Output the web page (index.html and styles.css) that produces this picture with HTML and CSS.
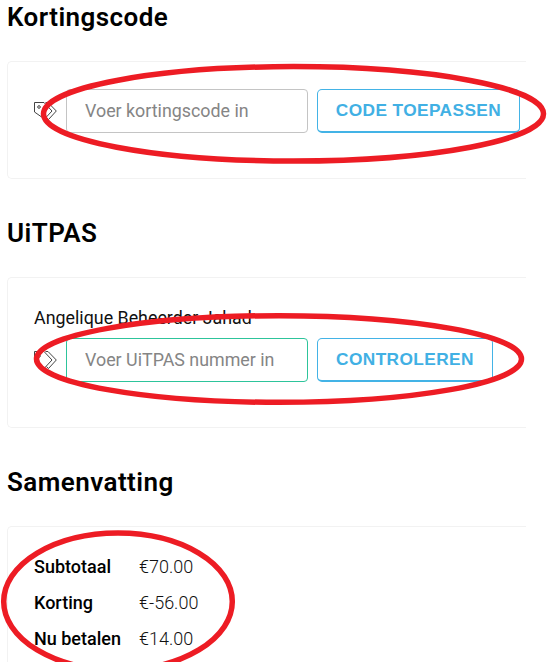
FILE: index.html
```html
<!DOCTYPE html>
<html lang="nl">
<head>
  <meta charset="UTF-8">
  <title>Samenvatting</title>
  <link rel="stylesheet" href="styles.css">
</head>
<body>

<svg class="hidden" width="0" height="0">
  <symbol id="tags" viewBox="0 0 23 18">
    <path d="M.5 .5h9.500l8 8.500-7.500 8L.5 10z"/>
    <circle cx="5" cy="5" r="1.300"/>
    <path d="M11.500 .5h2.500L22.300 9l-7.800 8.500-2-1.800"/>
  </symbol>
</svg>

<h2>Kortingscode</h2>
<div class="card card-code">
  <div class="form-row">
    <svg class="tags"><use href="#tags"/></svg>
    <input type="text" placeholder="Voer kortingscode in">
    <button class="btn-code">CODE TOEPASSEN</button>
  </div>
</div>

<h2>UiTPAS</h2>
<div class="card card-uitpas">
  <div class="name">Angelique Beheerder Jahad</div>
  <div class="form-row">
    <svg class="tags"><use href="#tags"/></svg>
    <input class="valid" type="text" placeholder="Voer UiTPAS nummer in">
    <button class="btn-check">CONTROLEREN</button>
  </div>
</div>

<h2>Samenvatting</h2>
<div class="card card-summary">
  <table>
    <tr>
      <th>Subtotaal</th>
      <td>€70.00</td>
    </tr>
    <tr>
      <th>Korting</th>
      <td>€-56.00</td>
    </tr>
    <tr>
      <th>Nu betalen</th>
      <td>€14.00</td>
    </tr>
  </table>
</div>

<!-- Red markings over the page -->
<svg class="marks" width="552" height="662">
  <ellipse cx="293.500" cy="113.800" rx="250" ry="47.200"/>
  <ellipse cx="279" cy="359" rx="242.500" ry="43.300"/>
  <ellipse cx="118" cy="601.500" rx="114.300" ry="68.500"/>
</svg>

</body>
</html>
```

FILE: styles.css
```css
* {
  box-sizing: border-box;
}
body {
  margin: 0;
  padding-left: 7px;
  height: 662px;
  overflow: hidden;
  background-color: #fff;
  color: #111;
  font-family: Roboto, sans-serif;
  font-size: 17.85px;
}
h2 {
  margin: 0;
  height: 61px;
  line-height: 34px;
  font-size: 26px;
  font-weight: 600;
  letter-spacing: 0.45px;
  color: #000;
}
.card {
  width: 519px;
  border: 1px solid #f2f2f2;
  border-right: none;
  border-radius: 5px 0 0 5px;
  padding-left: 26px;
  margin-bottom: 37px;
}
.card-code {
  height: 118px;
  padding-top: 27px;
}
.card-uitpas {
  height: 151px;
  padding-top: 27px;
}
.card-summary {
  height: 136px;
  padding-top: 21px;
  border-bottom: none;
  border-radius: 5px 0 0 0;
  margin-bottom: 0;
}
.name {
  height: 33px;
  line-height: 26px;
}
.form-row {
  display: flex;
  align-items: flex-start;
}
.hidden {
  position: absolute;
}
.tags {
  width: 23px;
  height: 18px;
  margin: 13px 9px 0 0;
  fill: none;
  stroke: #444;
  stroke-width: 1;
}
input {
  width: 242px;
  height: 44px;
  margin-right: 9px;
  padding: 0 18px 1px;
  border: 1px solid #c4c4c4;
  border-radius: 4px;
  background-color: #fff;
  font-family: inherit;
  font-size: 17.85px;
}
input::placeholder {
  color: #858585;
}
input.valid {
  border-color: #2dc49b;
}
button {
  height: 44px;
  padding: 0;
  border: 1px solid #43b3e6;
  border-bottom-width: 2px;
  border-radius: 5px;
  background-color: #fff;
  color: #41b0e4;
  font-family: "Liberation Sans", sans-serif;
  font-size: 17.3px;
  font-weight: bold;
  letter-spacing: 0.4px;
}
.btn-code {
  width: 203px;
}
.btn-check {
  width: 176px;
}
table {
  border-collapse: collapse;
  font-size: 18px;
}
th, td {
  height: 36px;
  padding: 0;
  text-align: left;
}
th {
  width: 105px;
  font-weight: 500;
  color: #000;
}
td {
  font-weight: 300;
}
.marks {
  position: absolute;
  left: 0;
  top: 0;
  fill: none;
  stroke: #ed1c24;
  stroke-width: 5.5;
}
```
